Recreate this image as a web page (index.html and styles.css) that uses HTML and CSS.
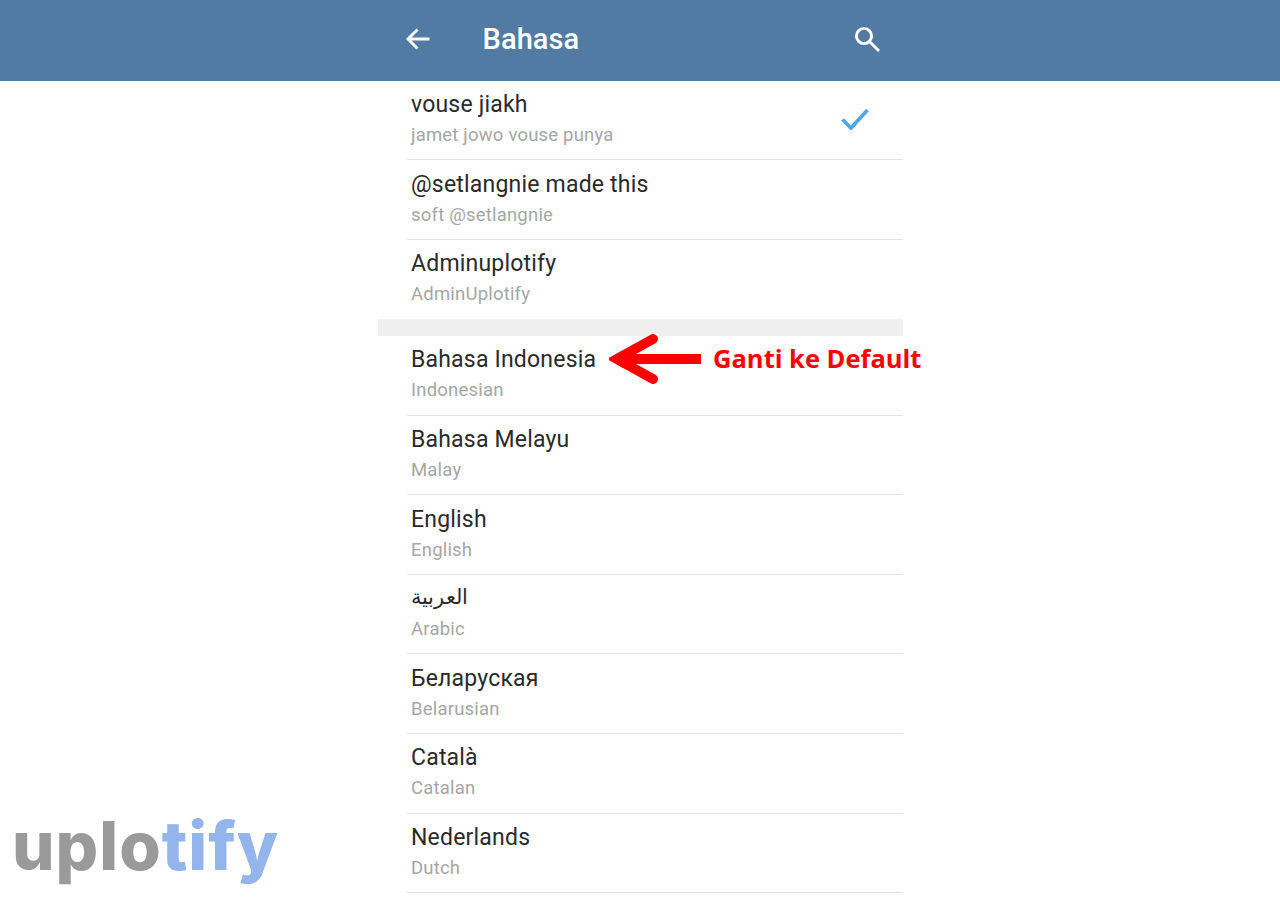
FILE: index.html
```html
<!DOCTYPE html>
<html lang="en">
<head>
    <meta charset="UTF-8">
    <meta name="viewport" content="width=device-width, initial-scale=1.0">
    <title>Bahasa</title>
    <link rel="stylesheet" href="styles.css">
</head>
<body>
    <header class="topbar">
        <div class="topbar-inner">
            <svg class="icon-back" width="26" height="24" viewBox="0 0 26 24" fill="none" stroke="#fff" stroke-width="2.9">
                <path d="M24.5 12H3M12.5 2.5L3 12l9.5 9.5"/>
            </svg>
            <h1 class="title">Bahasa</h1>
            <svg class="icon-search" width="28" height="28" viewBox="0 0 28 28" fill="none" stroke="#fff" stroke-width="2.9">
                <circle cx="11" cy="11" r="7.6"/>
                <path d="M16.5 16.5L26 26"/>
            </svg>
        </div>
    </header>

    <main class="phone">
        <ul class="lang-list">
            <li class="lang-row">
                <div class="lang-name">vouse jiakh</div>
                <div class="lang-sub">jamet jowo vouse punya</div>
                <svg class="icon-check" width="28" height="22" viewBox="0 0 28 22" fill="none" stroke="#4fa8e4" stroke-width="3.8">
                    <path d="M1.5 11.5l8.5 8.5L26.5 2"/>
                </svg>
            </li>
            <li class="lang-row">
                <div class="lang-name">@setlangnie made this</div>
                <div class="lang-sub">soft @setlangnie</div>
            </li>
            <li class="lang-row no-line">
                <div class="lang-name">Adminuplotify</div>
                <div class="lang-sub">AdminUplotify</div>
            </li>
        </ul>
        <div class="section-gap"></div>
        <ul class="lang-list">
            <li class="lang-row">
                <div class="lang-name">Bahasa Indonesia</div>
                <div class="lang-sub">Indonesian</div>
            </li>
            <li class="lang-row">
                <div class="lang-name">Bahasa Melayu</div>
                <div class="lang-sub">Malay</div>
            </li>
            <li class="lang-row">
                <div class="lang-name">English</div>
                <div class="lang-sub">English</div>
            </li>
            <li class="lang-row">
                <div class="lang-name lang-arabic" lang="ar">العربية</div>
                <div class="lang-sub">Arabic</div>
            </li>
            <li class="lang-row">
                <div class="lang-name">Беларуская</div>
                <div class="lang-sub">Belarusian</div>
            </li>
            <li class="lang-row">
                <div class="lang-name">Català</div>
                <div class="lang-sub">Catalan</div>
            </li>
            <li class="lang-row">
                <div class="lang-name">Nederlands</div>
                <div class="lang-sub">Dutch</div>
            </li>
        </ul>
    </main>

    <div class="callout">
        <svg width="94" height="50" viewBox="0 0 94 50" fill="none" stroke="#ff0000">
            <path d="M92 25H14" stroke-width="10"/>
            <path d="M44 5L8 25l36 20" stroke-width="10" stroke-linecap="round"/>
            <path d="M0 25l14-9v18z" fill="#ff0000" stroke="none"/>
        </svg>
        <span class="callout-text">Ganti ke Default</span>
    </div>

    <div class="logo"><span class="logo-grey">uplo</span><span class="logo-blue">tify</span></div>
</body>
</html>
```

FILE: styles.css
```css
html, body {
    height: 898px;
    overflow: hidden;
}

body {
    margin: 0;
    font-family: Roboto, Arial, sans-serif;
    background-color: #fff;
    color: #222;
}

.topbar {
    height: 80.6px;
    background-color: #527ba3;
}

.topbar-inner {
    width: 525px;
    height: 100%;
    margin: 0 auto;
    display: flex;
    align-items: center;
    box-sizing: border-box;
    padding: 0 22px 3px 27px;
}

.icon-back {
    flex: none;
}

.title {
    flex: 1;
    margin: 0 0 0 52px;
    font-size: 29px;
    font-weight: 500;
    letter-spacing: 0.1px;
    color: #fff;
}

.phone {
    width: 525px;
    margin: 0 auto;
}

.lang-list {
    list-style: none;
    margin: 0;
    padding: 0;
}

.lang-row {
    position: relative;
    height: 79.6px;
    box-sizing: border-box;
    margin-left: 29px;
    padding: 9.4px 0 0 4.5px;
    border-bottom: 1px solid #e3e3e3;
}

.no-line {
    border-bottom: none;
}

.lang-name {
    font-size: 23px;
    line-height: 30px;
    letter-spacing: 0.2px;
    color: #2a2a2a;
}

.lang-arabic {
    font-size: 20.5px;
    letter-spacing: 0;
    position: relative;
    top: -2px;
}

.lang-sub {
    margin-top: 1px;
    font-size: 18.5px;
    line-height: 28px;
    letter-spacing: 0.2px;
    color: #a6a6a6;
}

.icon-check {
    position: absolute;
    top: 27px;
    right: 34px;
}

.section-gap {
    height: 16.6px;
    background-color: #efefef;
}

.callout {
    position: absolute;
    top: 334px;
    left: 609px;
    display: flex;
    align-items: center;
    gap: 10px;
}

.callout-text {
    padding-bottom: 2px;
    font-family: "Open Sans", Arial, sans-serif;
    font-size: 25.5px;
    font-weight: 700;
    color: #ff0000;
    white-space: nowrap;
}

.logo {
    position: absolute;
    left: 12px;
    top: 802px;
    font-family: Inter, "Open Sans", sans-serif;
    font-size: 67px;
    line-height: 88px;
    font-weight: 800;
    letter-spacing: 1px;
}

.logo-grey {
    color: #9a9a9a;
}

.logo-blue {
    color: #94b4ec;
}
```
